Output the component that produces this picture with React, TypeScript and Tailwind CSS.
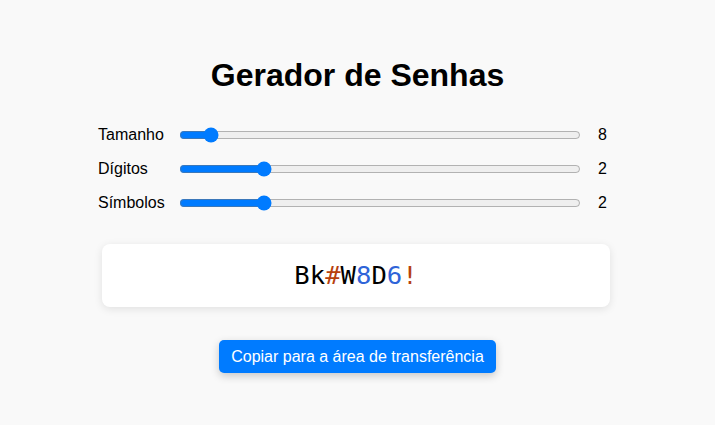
import { useState } from 'react'

const password = 'Bk#W8D6!'

function charColor(c: string) {
  if (/[0-9]/.test(c)) return 'text-[#2f64d8]'
  if (/[A-Za-z]/.test(c)) return 'text-black'
  return 'text-[#b7410e]'
}

export default function App() {
  const [length, setLength] = useState(8)
  const [digits, setDigits] = useState(2)
  const [symbols, setSymbols] = useState(2)

  const rows = [
    { label: 'Tamanho', value: length, set: setLength, min: 4, max: 68 },
    { label: 'Dígitos', value: digits, set: setDigits, min: 0, max: 10 },
    { label: 'Símbolos', value: symbols, set: setSymbols, min: 0, max: 10 },
  ]

  return (
    <div className="min-h-screen bg-[#f9f9f9] font-['Liberation_Sans',Arial,sans-serif] text-black">
      <div className="flex flex-col pt-[57px]">
        <h1 className="text-center text-[32px] font-bold leading-[37px]">Gerador de Senhas</h1>

        {/* Sliders */}
        <div className="mt-[24px] pl-[98px]">
          {rows.map((row) => (
            <div key={row.label} className="flex h-[34px] items-center">
              <label className="w-[81px] text-base">{row.label}</label>
              <input
                type="range"
                min={row.min}
                max={row.max}
                value={row.value}
                onChange={(e) => row.set(Number(e.target.value))}
                className="m-0 h-4 w-[402px] accent-[#007bff]"
              />
              <span className="ml-[17px] text-base">{row.value}</span>
            </div>
          ))}
        </div>

        {/* Password */}
        <div className="ml-[102px] mt-[24px] flex h-[63px] w-[508px] items-center justify-center rounded-lg bg-white shadow-[0_2px_8px_rgba(0,0,0,0.1)]">
          <span className="font-['DejaVu_Sans_Mono',monospace] text-[25.6px]">
            {password.split('').map((c, i) => (
              <span key={i} className={charColor(c)}>
                {c}
              </span>
            ))}
          </span>
        </div>

        <button className="mx-auto mt-[33px] h-[33px] rounded-[5px] bg-[#007bff] px-3 text-base text-white shadow-[0_3px_8px_rgba(0,0,0,0.2)]">
          Copiar para a área de transferência
        </button>
      </div>
    </div>
  )
}
